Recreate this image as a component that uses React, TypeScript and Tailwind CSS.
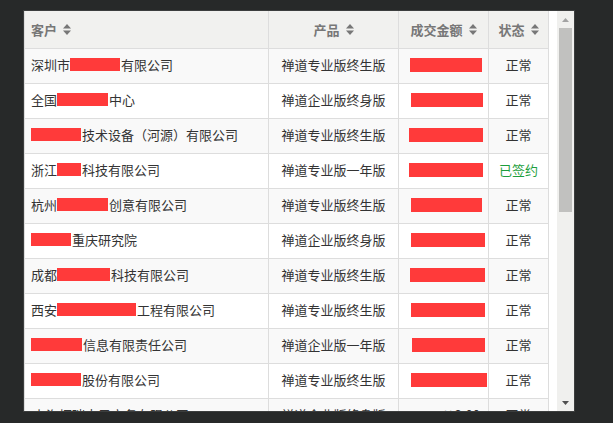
import React from "react";

type Row = {
  pre: string;
  mask: number;
  post: string;
  product: string;
  amount: [number, number];
  status: string;
};

const rows: Row[] = [
  { pre: "深圳市", mask: 50, post: "有限公司", product: "禅道专业版终生版", amount: [11, 72], status: "正常" },
  { pre: "全国", mask: 51, post: "中心", product: "禅道企业版终身版", amount: [12, 72], status: "正常" },
  { pre: "", mask: 50, post: "技术设备（河源）有限公司", product: "禅道专业版终生版", amount: [10, 74], status: "正常" },
  { pre: "浙江", mask: 24, post: "科技有限公司", product: "禅道专业版一年版", amount: [10, 74], status: "已签约" },
  { pre: "杭州", mask: 51, post: "创意有限公司", product: "禅道专业版终生版", amount: [12, 71], status: "正常" },
  { pre: "", mask: 40, post: "重庆研究院", product: "禅道企业版终身版", amount: [12, 74], status: "正常" },
  { pre: "成都", mask: 53, post: "科技有限公司", product: "禅道专业版终生版", amount: [11, 75], status: "正常" },
  { pre: "西安", mask: 79, post: "工程有限公司", product: "禅道专业版终生版", amount: [12, 74], status: "正常" },
  { pre: "", mask: 51, post: "信息有限责任公司", product: "禅道企业版一年版", amount: [13, 73], status: "正常" },
  { pre: "", mask: 50, post: "股份有限公司", product: "禅道专业版终生版", amount: [12, 76], status: "正常" },
];

const cols = "grid grid-cols-[244px_130px_90px_60px]";

function SortIcon() {
  return (
    <svg width="8" height="11" viewBox="0 0 8 11" className="ml-[6px] shrink-0">
      <polygon points="0,4.5 4,0 8,4.5" fill="#777" />
      <polygon points="0,6.5 8,6.5 4,11" fill="#777" />
    </svg>
  );
}

function Mask({ w }: { w: number }) {
  return <span className="inline-block h-[13px] bg-[#ff3a3a] shrink-0" style={{ width: w }} />;
}

export default function App() {
  return (
    <div
      className="w-[613px] h-[423px] bg-[#272929] pt-[11px] pl-[24px] overflow-hidden"
      style={{ fontFamily: '"Noto Sans CJK SC", "Noto Sans", sans-serif' }}
    >
      <div className="w-[550px] h-[400px] bg-white flex overflow-hidden ring-1 ring-[#3c3e3e]">
        {/* table */}
        <div className="w-[533px] h-full overflow-hidden">
          <div className="w-[525px] border-l border-[#dddddd] text-[13px]">
            <div className={`${cols} h-[38px] bg-[#f1f1ef] border-b border-[#dddddd] font-bold text-[#777]`}>
              <div className="flex items-center pl-[6px] border-r border-[#dddddd]">
                客户
                <SortIcon />
              </div>
              <div className="flex items-center justify-center border-r border-[#dddddd]">
                产品
                <SortIcon />
              </div>
              <div className="flex items-center justify-center border-r border-[#dddddd]">
                成交金额
                <SortIcon />
              </div>
              <div className="flex items-center justify-center border-r border-[#dddddd]">
                状态
                <SortIcon />
              </div>
            </div>

            {rows.map((r, i) => (
              <div
                key={i}
                className={`${cols} h-[35px] border-b border-[#dddddd] text-[#333] ${i % 2 === 0 ? "bg-[#f9f9f9]" : "bg-white"}`}
              >
                <div className="flex items-center pl-[6px] pb-[3px] border-r border-[#dddddd] whitespace-nowrap">
                  {r.pre}
                  <Mask w={r.mask} />
                  <span className="ml-[1px]">{r.post}</span>
                </div>
                <div className="flex items-center justify-center pb-[3px] border-r border-[#dddddd]">{r.product}</div>
                <div className="flex items-center pb-[3px] border-r border-[#dddddd]" style={{ paddingLeft: r.amount[0] }}>
                  <span className="inline-block h-[14px] bg-[#ff3a3a]" style={{ width: r.amount[1] }} />
                </div>
                <div
                  className={`flex items-center justify-center pb-[3px] border-r border-[#dddddd] ${
                    r.status === "已签约" ? "text-[#1d9e3c]" : ""
                  }`}
                >
                  {r.status}
                </div>
              </div>
            ))}

            <div className={`${cols} h-[35px] bg-[#f9f9f9] text-[#333]`}>
              <div className="flex items-center pl-[8px] pb-[3px] border-r border-[#dddddd] whitespace-nowrap">上海恒瑞电子商务有限公司</div>
              <div className="flex items-center justify-center pb-[3px] border-r border-[#dddddd]">禅道企业版终身版</div>
              <div className="flex items-center justify-end pr-[8px] pb-[3px] border-r border-[#dddddd]">¥ 2.00</div>
              <div className="flex items-center justify-center pb-[3px] border-r border-[#dddddd]">正常</div>
            </div>
          </div>
        </div>

        {/* scrollbar */}
        <div className="w-[17px] h-full bg-[#f0f0ee] flex flex-col items-center">
          <div className="h-[17px] flex items-center justify-center">
            <svg width="7" height="4" viewBox="0 0 7 4">
              <polygon points="0,4 3.5,0 7,4" fill="#a3a3a3" />
            </svg>
          </div>
          <div className="w-[13px] h-[184px] bg-[#c1c1bf]" />
          <div className="flex-1" />
          <div className="h-[17px] flex items-center justify-center">
            <svg width="7" height="4" viewBox="0 0 7 4">
              <polygon points="0,0 7,0 3.5,4" fill="#505050" />
            </svg>
          </div>
        </div>
      </div>
    </div>
  );
}
